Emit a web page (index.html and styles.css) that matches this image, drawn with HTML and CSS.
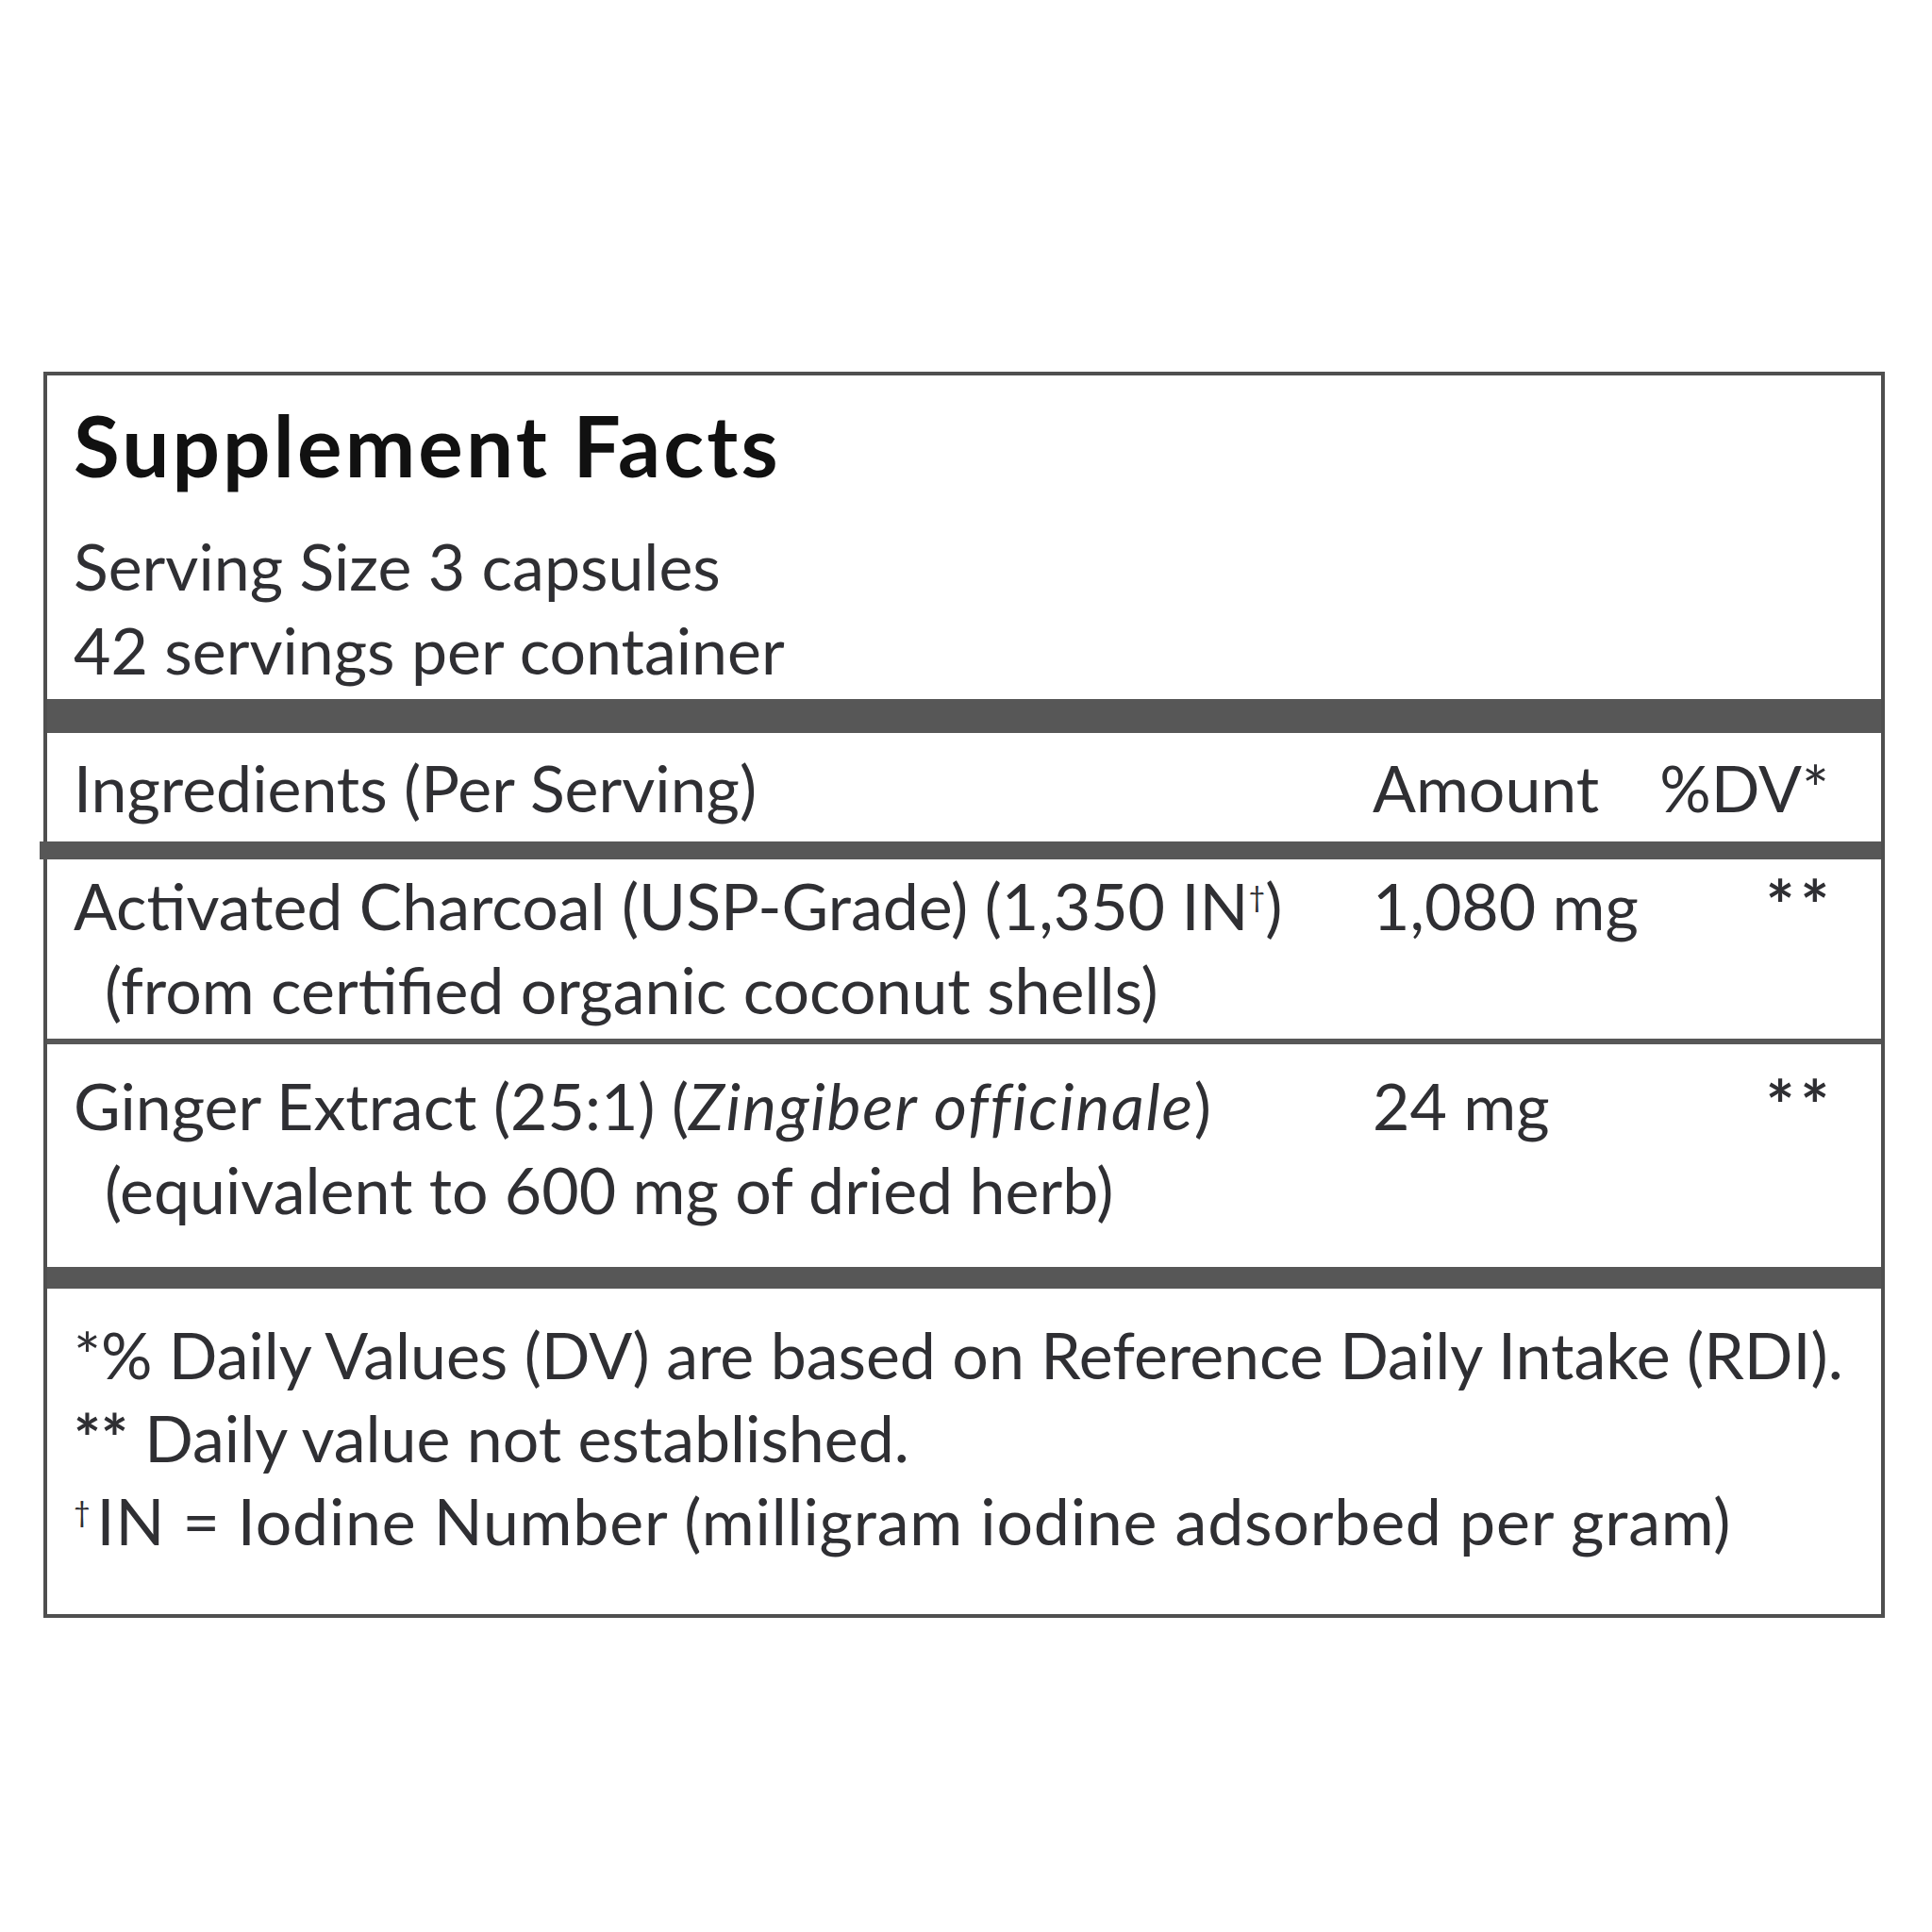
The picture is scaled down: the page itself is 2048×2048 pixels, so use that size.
FILE: index.html
```html
<!DOCTYPE html>
<html lang="en">
<head>
<meta charset="utf-8">
<title>Supplement Facts</title>
<link rel="stylesheet" href="styles.css">
</head>
<body>
<div class="label">
  <section class="head">
    <h1 class="title">Supplement Facts</h1>
    <div class="line">Serving Size 3 capsules</div>
    <div class="line">42 servings per container</div>
  </section>
  <div class="bar bar-thick"></div>
  <div class="row row-header">
    <div class="name">Ingredients (Per Serving)</div>
    <div class="amount">Amount</div>
    <div class="dv">%DV*</div>
  </div>
  <div class="bar bar-mid"></div>
  <div class="row row-first">
    <div class="name">
      <div class="line">Activated Charcoal (USP-Grade) (1,350 IN<sup class="dag dag-tight">†</sup>)</div>
      <div class="line sub">(from certified organic coconut shells)</div>
    </div>
    <div class="amount">1,080 mg</div>
    <div class="dv stars">**</div>
  </div>
  <div class="bar bar-thin"></div>
  <div class="row row-second">
    <div class="name">
      <div class="line">Ginger Extract (25:1) (<em>Zingiber officinale</em>)</div>
      <div class="line sub">(equivalent to 600 mg of dried herb)</div>
    </div>
    <div class="amount">24 mg</div>
    <div class="dv stars">**</div>
  </div>
  <div class="bar bar-low"></div>
  <section class="notes">
    <div class="line">*% Daily Values (DV) are based on Reference Daily Intake (RDI).</div>
    <div class="line"><span class="stars-inline">**</span> Daily value not established.</div>
    <div class="line wide"><sup class="dag">†</sup>IN = Iodine Number (milligram iodine adsorbed per gram)</div>
  </section>
</div>
</body>
</html>
```

FILE: styles.css
```css
* { box-sizing: border-box; }

html, body {
  margin: 0;
  padding: 0;
  background: #ffffff;
}

body {
  font-family: Lato, "Open Sans", "Liberation Sans", sans-serif;
  color: #2f2f33;
  padding: 394px 0 0 46px;
}

.label {
  width: 1952px;
  border: 4px solid #4f4f4f;
  background: #ffffff;
}

.head {
  padding: 24px 28px 8px 28px;
}

.title {
  margin: 0 0 33px 0;
  font-size: 89px;
  line-height: 100px;
  font-weight: 700;
  letter-spacing: 0.035em;
  color: #111111;
}

.line {
  font-size: 68px;
  line-height: 89px;
  letter-spacing: 0;
  white-space: nowrap;
}

.line.wide {
  letter-spacing: 0.012em;
}

.bar {
  background: #575757;
}

.bar-thick { height: 36px; }
.bar-mid { height: 19px; margin-left: -8px; }
.bar-thin { height: 6px; }
.bar-low { height: 23px; }

.row {
  display: grid;
  grid-template-columns: 1fr 300px 184px;
  padding: 0 55px 0 28px;
  font-size: 68px;
  line-height: 89px;
}

.row-header { padding-top: 13px; padding-bottom: 13px; }
.row-first { padding-top: 4px; padding-bottom: 8px; }
.row-second { padding-top: 20px; padding-bottom: 38px; }

.name { white-space: nowrap; }

.sub { padding-left: 33px; }

.amount { white-space: nowrap; }

.dv {
  text-align: right;
  white-space: nowrap;
}

.stars {
  font-size: 72px;
  letter-spacing: 6px;
  font-weight: 700;
  margin-right: -6px;
}

.stars-inline {
  font-weight: 700;
}

.dag {
  font-size: 0.45em;
  vertical-align: 0.8em;
  line-height: 0;
  margin-right: 6px;
}

.dag-tight {
  margin-right: 0;
}

em {
  font-style: italic;
  letter-spacing: 0.025em;
}

.notes {
  padding: 26px 28px 55px 28px;
}

.notes .line {
  line-height: 88px;
}
```
